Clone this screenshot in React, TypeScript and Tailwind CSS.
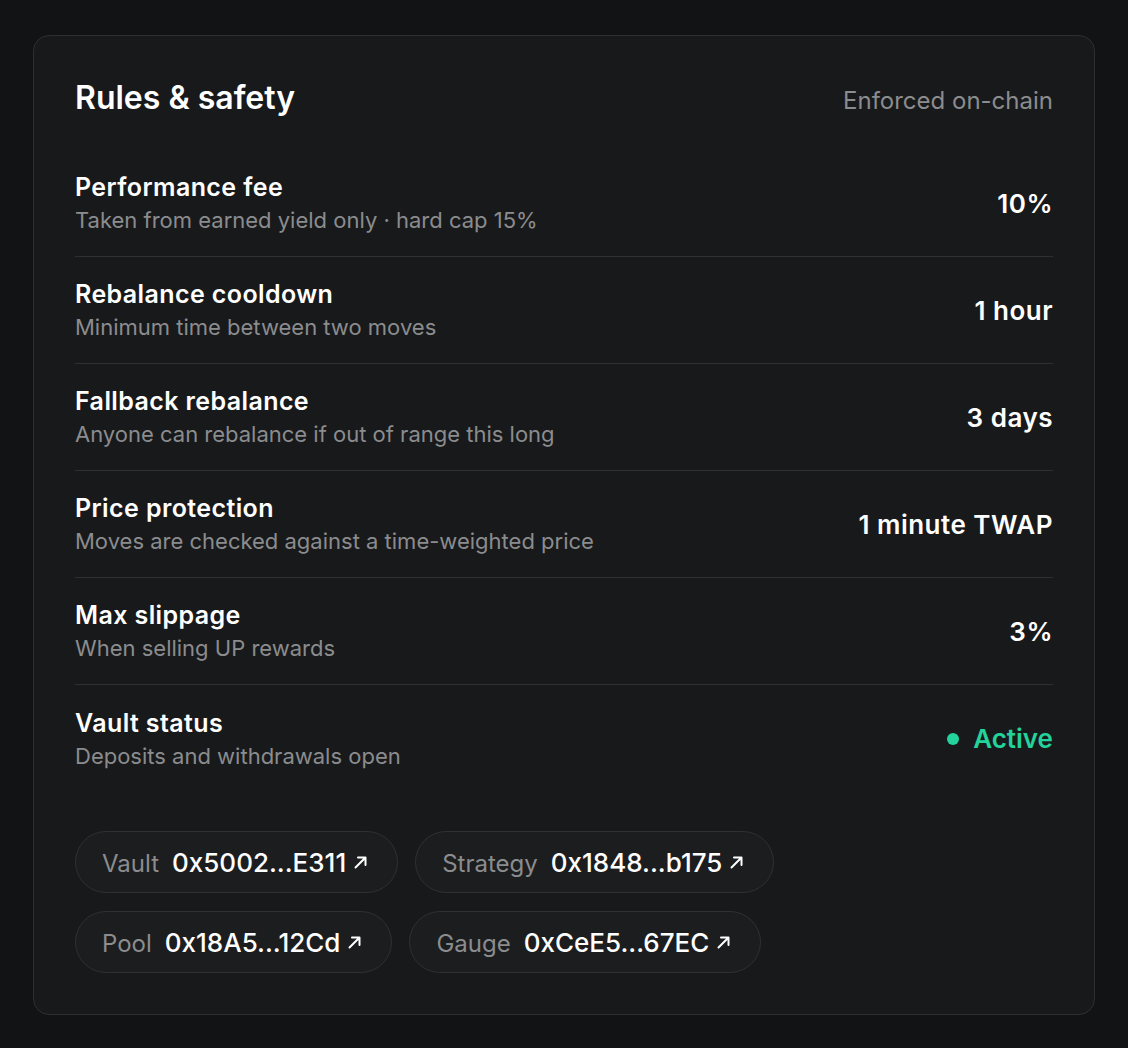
import React from 'react'

type Rule = {
  label: string
  hint: string
  value: string
  status?: boolean
}

const rules: Rule[] = [
  { label: 'Performance fee', hint: 'Taken from earned yield only · hard cap 15%', value: '10%' },
  { label: 'Rebalance cooldown', hint: 'Minimum time between two moves', value: '1 hour' },
  { label: 'Fallback rebalance', hint: 'Anyone can rebalance if out of range this long', value: '3 days' },
  { label: 'Price protection', hint: 'Moves are checked against a time-weighted price', value: '1 minute TWAP' },
  { label: 'Max slippage', hint: 'When selling UP rewards', value: '3%' },
  { label: 'Vault status', hint: 'Deposits and withdrawals open', value: 'Active', status: true },
]

const contracts = [
  [
    { name: 'Vault', addr: '0x5002...E311' },
    { name: 'Strategy', addr: '0x1848...b175' },
  ],
  [
    { name: 'Pool', addr: '0x18A5...12Cd' },
    { name: 'Gauge', addr: '0xCeE5...67EC' },
  ],
]

function ArrowIcon() {
  return (
    <svg width="18" height="18" viewBox="0 0 18 18" fill="none" className="ml-[6px] shrink-0">
      <path d="M3.5 14.5L13.5 4.5M6 4.5H13.5V12" stroke="white" strokeWidth="2" strokeLinecap="round" strokeLinejoin="round" />
    </svg>
  )
}

function ContractPill({ name, addr }: { name: string; addr: string }) {
  return (
    <a className="flex h-[62px] items-center rounded-full border border-[#2f3033] bg-[#1c1d1f] pl-[26px] pr-[27px]">
      <span className="flex items-baseline">
        <span className="text-[24px] text-[#8b8c8e]">{name}</span>
        <span className="ml-[13px] text-[26px] font-medium text-white">{addr}</span>
      </span>
      <ArrowIcon />
    </a>
  )
}

export default function App() {
  return (
    <div
      className="min-h-[1048px] bg-[#121315] px-[33px] pt-[35px] pb-[33px]"
      style={{ fontFamily: 'Inter, "Noto Sans", sans-serif' }}
    >
      <div className="rounded-[16px] border border-[#2e2f32] bg-[#18191b] px-[41px] pt-[40px] pb-[41px]">
        <div className="flex items-baseline justify-between">
          <h2 className="text-[32px] leading-[44px] font-semibold text-white">Rules &amp; safety</h2>
          <span className="text-[24px] text-[#8b8c8e]">Enforced on-chain</span>
        </div>

        <div className="mt-[30px]">
          {rules.map((r, i) => (
            <div
              key={r.label}
              className={`flex h-[107px] items-center justify-between ${i < rules.length - 1 ? 'border-b border-[#2f3033]' : ''}`}
            >
              <div>
                <div className="text-[25px] leading-[32px] font-semibold tracking-[0.4px] text-white">{r.label}</div>
                <div className="mt-[2px] text-[22px] leading-[30px] text-[#8b8c8e]">{r.hint}</div>
              </div>
              {r.status ? (
                <div className="flex items-center text-[26px] font-semibold text-[#22d39b]">
                  <span className="mr-[14px] h-[12px] w-[12px] rounded-full bg-[#22d39b]" />
                  {r.value}
                </div>
              ) : (
                <div className="text-[26px] font-semibold tracking-[0.5px] text-white">{r.value}</div>
              )}
            </div>
          ))}
        </div>

        <div className="mt-[39px] flex flex-col gap-[18px]">
          {contracts.map((row, i) => (
            <div key={i} className="flex gap-[17px]">
              {row.map((c) => (
                <ContractPill key={c.name} name={c.name} addr={c.addr} />
              ))}
            </div>
          ))}
        </div>
      </div>
    </div>
  )
}
